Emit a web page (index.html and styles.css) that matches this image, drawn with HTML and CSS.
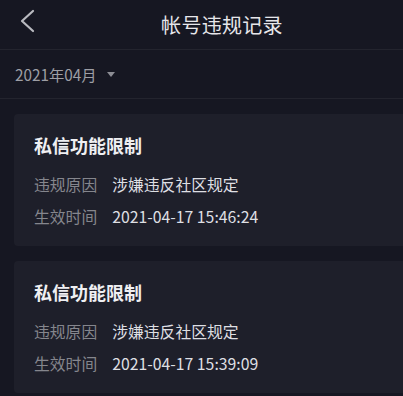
FILE: index.html
```html
<!DOCTYPE html>
<html lang="zh">
<head>
<meta charset="utf-8">
<link rel="stylesheet" href="styles.css">
</head>
<body>
<div class="screen">
  <header class="nav">
    <svg class="back" width="16" height="24" viewBox="0 0 16 24"><polyline points="13,2 2,12 13,22" fill="none" stroke="#b9bac0" stroke-width="2.2" stroke-linecap="round" stroke-linejoin="round"/></svg>
    <h1 class="nav-title">帐号违规记录</h1>
  </header>
  <div class="filter">
    <span class="month">2021年04月</span>
    <svg class="caret" width="8" height="6" viewBox="0 0 8 6"><polygon points="0,0 8,0 4,5" fill="#8c8d94"/></svg>
  </div>
  <main class="list">
    <section class="card">
      <h2 class="card-title">私信功能限制</h2>
      <div class="row"><span class="label">违规原因</span><span class="value">涉嫌违反社区规定</span></div>
      <div class="row"><span class="label">生效时间</span><span class="value">2021-04-17 15:46:24</span></div>
    </section>
    <section class="card">
      <h2 class="card-title">私信功能限制</h2>
      <div class="row"><span class="label">违规原因</span><span class="value">涉嫌违反社区规定</span></div>
      <div class="row"><span class="label">生效时间</span><span class="value">2021-04-17 15:39:09</span></div>
    </section>
  </main>
</div>
</body>
</html>
```
FILE: styles.css
```css
html, body {
  margin: 0;
  padding: 0;
  background: #161722;
  overflow: hidden;
}
body {
  font-family: "Noto Sans CJK SC", "Noto Sans", sans-serif;
}
.screen {
  width: 403px;
  height: 396px;
  background: #161722;
}
.nav {
  position: relative;
  height: 49px;
  box-sizing: content-box;
  display: flex;
  align-items: center;
  justify-content: center;
  padding-left: 41px;
  border-bottom: 1px solid #23242e;
}
.back {
  position: absolute;
  left: 20px;
  top: 9px;
}
.nav-title {
  margin: 0;
  font-size: 20px;
  font-weight: 400;
  color: #e6e6ea;
  line-height: 24px;
  letter-spacing: 0.3px;
}
.filter {
  height: 48px;
  display: flex;
  align-items: center;
  padding-left: 15px;
  gap: 10px;
  border-bottom: 1px solid #23242e;
}
.month {
  font-size: 15.3px;
  color: #9d9ea5;
  line-height: 20px;
}
.caret {
  margin-top: 1px;
}
.list {
  padding: 15px 0 0 14px;
  display: flex;
  flex-direction: column;
  gap: 15px;
}
.card {
  height: 132px;
  box-sizing: border-box;
  background: #1e1f2a;
  border-radius: 4px 0 0 4px;
  padding: 18px 20px 0;
}
.card-title {
  margin: 0 0 10px;
  font-size: 18px;
  font-weight: 700;
  color: #efeff2;
  line-height: 26px;
}
.row {
  display: flex;
  gap: 15px;
  height: 32px;
  align-items: center;
  font-size: 15.8px;
}
.label {
  color: #85868d;
}
.value {
  color: #dedfe3;
}
```
